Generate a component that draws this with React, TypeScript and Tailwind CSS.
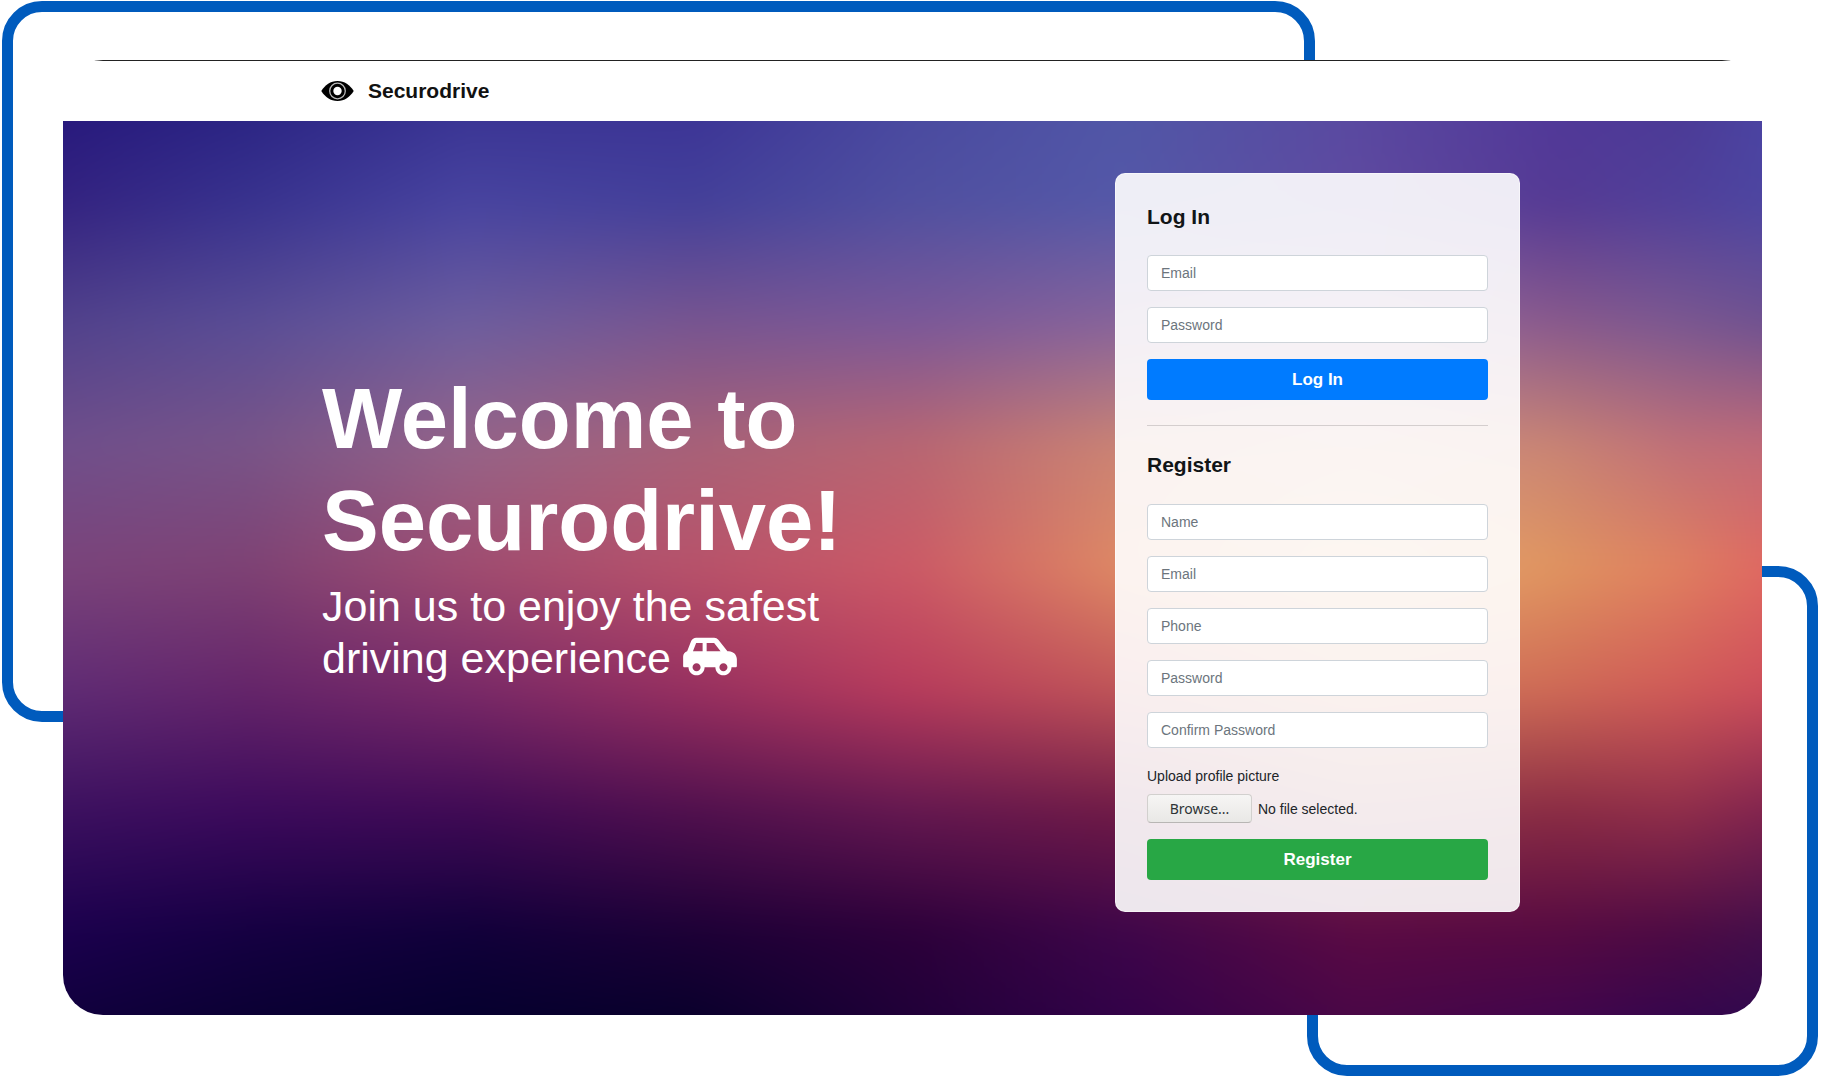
import { useRef, useState } from "react";
import { FaCarSide } from "react-icons/fa";

/* Colour mesh of the hero: one list of top-to-bottom colours per column. */
const MESH: { x: number; colors: string[] }[] = [
  { x: 0, colors: ["#22137a", "#33207e", "#50408a", "#6e4e8c", "#7a447c", "#5f2d77", "#3c1260", "#1c0050", "#0e0038"] },
  { x: 12.5, colors: ["#272080", "#38328e", "#5a4d95", "#785488", "#7e4274", "#65256a", "#3c0a5c", "#150042", "#07002e"] },
  { x: 25, colors: ["#363090", "#4844a0", "#6e5e9e", "#966488", "#a04c70", "#7a2a68", "#400a55", "#10003a", "#02002a"] },
  { x: 37.5, colors: ["#3a3094", "#43409a", "#785590", "#a86278", "#b8526a", "#983060", "#50104e", "#1c0036", "#020028"] },
  { x: 50, colors: ["#4848a0", "#5050a0", "#7c5898", "#b86672", "#cc5a66", "#b83c5c", "#641850", "#2c003a", "#1c0038"] },
  { x: 62, colors: ["#5056a6", "#5458a8", "#88649a", "#cb8474", "#df8a64", "#c05558", "#6f1a46", "#3e064a", "#2e0048"] },
  { x: 75, colors: ["#5848a0", "#5f4aa0", "#9a70a0", "#d09080", "#e8a870", "#d07858", "#903848", "#5a0a44", "#440648"] },
  { x: 86, colors: ["#50389a", "#553a94", "#8a5a8c", "#c98474", "#e09560", "#cf6a56", "#8a2c44", "#560a42", "#3a0450"] },
  { x: 93, colors: ["#4a3894", "#50409a", "#7c5890", "#c07078", "#e08060", "#d05a58", "#902e4a", "#4c0a44", "#2c0450"] },
  { x: 100, colors: ["#4a48a8", "#4c48a4", "#6c5090", "#c06878", "#e06062", "#cc4a5c", "#7c2050", "#40104c", "#280850"] },
];

function MeshBackground() {
  return (
    <div className="absolute -inset-10 blur-lg" aria-hidden="true">
      {MESH.map((column, i) => (
        <div
          key={column.x}
          className="absolute inset-0"
          style={{
            backgroundImage: `linear-gradient(to bottom, ${column.colors.join(", ")})`,
            maskImage:
              i === 0
                ? undefined
                : `linear-gradient(to right, transparent ${MESH[i - 1].x}%, black ${column.x}%)`,
          }}
        />
      ))}
    </div>
  );
}

function EyeLogo() {
  return (
    <svg className="h-[22px] w-[33px]" viewBox="0 0 33 22" aria-hidden="true">
      <path d="M0.3 11C4 5 9.5 1 16.5 1S29 5 32.7 11C29 17 23.5 21 16.5 21S4 17 0.3 11Z" fill="#000" />
      <circle cx="16.5" cy="11" r="7.8" fill="none" stroke="#b8b8b8" strokeWidth="1.3" />
      <circle cx="16.5" cy="11" r="4.2" fill="#fff" />
    </svg>
  );
}

function Field({ id, label, type = "text" }: { id: string; label: string; type?: string }) {
  return (
    <input
      id={id}
      name={id}
      type={type}
      aria-label={label}
      placeholder={label}
      className="block h-9 w-full rounded border border-[#ced4da] bg-white px-[13px] text-[14px] leading-5 text-[#495057] placeholder:text-[#6c757d]"
    />
  );
}

function UploadField() {
  const input = useRef<HTMLInputElement>(null);
  const [name, setName] = useState("No file selected.");
  return (
    <div className="mt-[18px] text-[14px] leading-5 text-[#212529]">
      <label htmlFor="picture" className="block">
        Upload profile picture
      </label>
      <input
        ref={input}
        id="picture"
        type="file"
        tabIndex={-1}
        className="sr-only"
        onChange={(e) => setName(e.target.files?.[0]?.name ?? "No file selected.")}
      />
      <div className="mt-2 flex items-center gap-1.5">
        <button
          type="button"
          onClick={() => input.current?.click()}
          className="h-[29px] w-[105px] rounded border border-[#d2d0ce] border-b-[#b8b6b4] bg-linear-to-b from-[#f6f5f4] to-[#e9e8e6] font-['Noto_Sans',sans-serif] text-[14px] text-[#2e3436]"
        >
          Browse...
        </button>
        <span>{name}</span>
      </div>
    </div>
  );
}

export default function App() {
  return (
    <div className="relative isolate min-h-screen overflow-hidden bg-white pt-[60px] pr-[62px] pb-[65px] pl-[63px] font-['Liberation_Sans',Arial,sans-serif]">
      <div className="absolute top-px left-0.5 -z-10 h-[721px] w-[72%] rounded-[40px] border-[11px] border-[#005bbd]" />
      <div className="absolute right-1.5 bottom-1 -z-10 h-[510px] w-[28%] rounded-[40px] border-[11px] border-[#005bbd]" />

      <div className="overflow-hidden rounded-[40px] bg-white">
        <header className="border-t border-[#222]">
          <a href="#" className="mx-auto flex h-[60px] max-w-[1215px] items-center gap-3.5 pl-4 text-[#111]">
            <EyeLogo />
            <span className="text-[21px] font-bold">Securodrive</span>
          </a>
        </header>

        <main className="relative overflow-hidden">
          <MeshBackground />
          <div className="relative mx-auto flex max-w-[1215px] items-center justify-between pt-[52px] pb-[103px] pl-[17px]">
            <section className="w-[560px] pb-[34px] text-white">
              <h1 className="text-[85px] leading-[102px] font-bold">Welcome to Securodrive!</h1>
              <p className="mt-2 text-[43px] leading-[52px]">
                Join us to enjoy the safest driving experience{" "}
                <FaCarSide className="inline h-[43px] w-[54px] align-[-5px]" aria-hidden="true" />
              </p>
            </section>

            <section className="w-[405px] rounded-[10px] border border-white/50 bg-white/90 px-[31px] pt-[30px] pb-[31px]">
              <form onSubmit={(e) => e.preventDefault()}>
                <h2 className="text-[21px] leading-[26px] font-bold text-[#111517]">Log In</h2>
                <div className="mt-[25px] flex flex-col gap-4">
                  <Field id="login-email" label="Email" type="email" />
                  <Field id="login-password" label="Password" type="password" />
                  <button type="submit" className="h-[41px] rounded bg-[#007bff] text-[17px] font-bold text-white">
                    Log In
                  </button>
                </div>
              </form>

              <hr className="mt-[25px] mb-[26px] border-t border-black/15" />

              <form onSubmit={(e) => e.preventDefault()}>
                <h2 className="text-[21px] leading-[26px] font-bold text-[#111517]">Register</h2>
                <div className="mt-[26px] flex flex-col gap-4">
                  <Field id="name" label="Name" />
                  <Field id="email" label="Email" type="email" />
                  <Field id="phone" label="Phone" type="tel" />
                  <Field id="password" label="Password" type="password" />
                  <Field id="confirm-password" label="Confirm Password" type="password" />
                </div>
                <UploadField />
                <button
                  type="submit"
                  className="mt-4 block h-[41px] w-full rounded bg-[#28a745] text-[17px] font-bold text-white"
                >
                  Register
                </button>
              </form>
            </section>
          </div>
        </main>
      </div>
    </div>
  );
}
